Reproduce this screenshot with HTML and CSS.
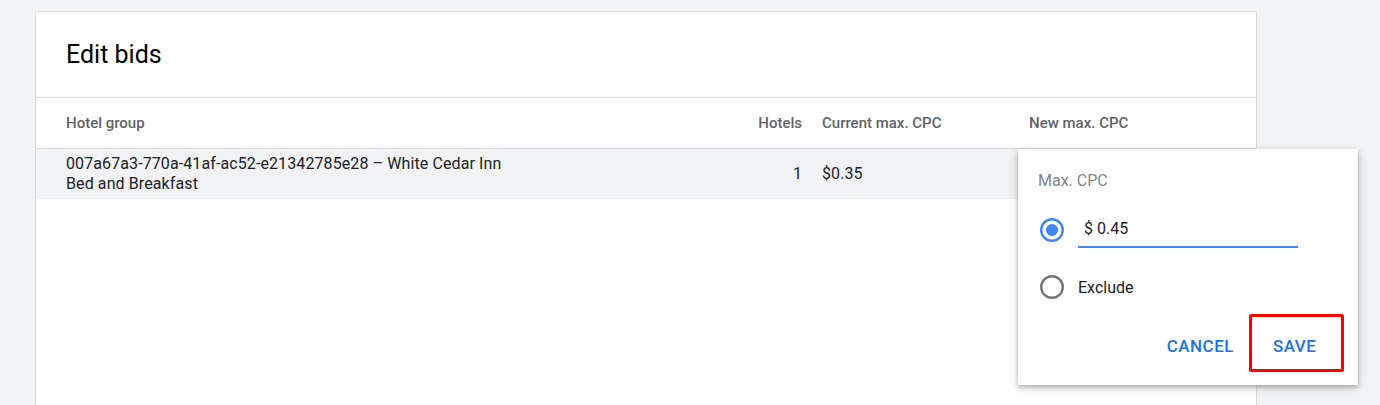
FILE: index.html
```html
<!DOCTYPE html>
<html>
<head>
<meta charset="utf-8">
<link rel="stylesheet" href="styles.css">
</head>
<body>
<div class="card">
  <div class="card-title">Edit bids</div>
  <div class="table">
    <div class="row head">
      <div class="cell group">Hotel group</div>
      <div class="cell num">Hotels</div>
      <div class="cell cur">Current max. CPC</div>
      <div class="cell new">New max. CPC</div>
    </div>
    <div class="row data">
      <div class="cell group">007a67a3-770a-41af-ac52-e21342785e28 – White Cedar Inn<br>Bed and Breakfast</div>
      <div class="cell num">1</div>
      <div class="cell cur">$0.35</div>
      <div class="cell new"></div>
    </div>
  </div>
  <div class="popup">
    <div class="popup-label">Max. CPC</div>
    <div class="opt opt-input">
      <svg class="radio" width="26" height="26" viewBox="0 0 26 26"><circle cx="13" cy="13" r="10.8" fill="none" stroke="#4285f4" stroke-width="2.4"/><circle cx="13" cy="13" r="6" fill="#4285f4"/></svg>
      <div class="field">$ 0.45</div>
    </div>
    <div class="opt">
      <svg class="radio" width="26" height="26" viewBox="0 0 26 26"><circle cx="13" cy="13" r="10.8" fill="none" stroke="#757575" stroke-width="2.4"/></svg>
      <div class="opt-text">Exclude</div>
    </div>
    <div class="actions">
      <div class="btn cancel">CANCEL</div>
      <div class="btn save">SAVE</div>
    </div>
  </div>
</div>
</body>
</html>
```
FILE: styles.css
```css
html, body {
  margin: 0;
  padding: 0;
  background: #f1f3f4;
  font-family: Roboto, "Liberation Sans", Arial, sans-serif;
  color: #202124;
  overflow: hidden;
  height: 405px;
}
.card {
  position: relative;
  margin: 11px 0 0 35px;
  width: 1222px;
  box-sizing: border-box;
  height: 420px;
  background: #fff;
  border: 1px solid #dadce0;
}
.card-title {
  font-size: 25px;
  font-weight: 400;
  color: #000;
  line-height: 32px;
  padding: 27px 30px 26px;
  border-bottom: 1px solid #dadce0;
}
.row {
  display: grid;
  grid-template-columns: 1fr 80px 227px 227px;
  padding-left: 30px;
  align-items: center;
}
.row.head {
  height: 50px;
  border-bottom: 1px solid #dadce0;
  font-size: 15px;
  font-weight: 500;
  color: #5f6368;
}
.row.data {
  height: 50px;
  background: #f1f3f4;
  font-size: 16px;
  line-height: 20px;
  letter-spacing: 0.1px;
  color: #202124;
}
.cell.num {
  text-align: right;
}
.cell.cur {
  padding-left: 20px;
}
.popup {
  position: absolute;
  left: 982px;
  top: 137px;
  width: 340px;
  box-sizing: border-box;
  background: #fff;
  padding: 24px 14px 13px 20px;
  box-shadow: 0 2px 4px rgba(0,0,0,0.2), 0 3px 10px rgba(0,0,0,0.18);
}
.popup-label {
  font-size: 16px;
  line-height: 16px;
  color: #80868b;
}
.opt {
  display: flex;
  align-items: center;
  height: 36px;
  margin-top: 21px;
  font-size: 16px;
}
.opt-input {
  margin-top: 22px;
  height: 37px;
}
.radio {
  flex: none;
  margin-left: 1px;
}
.field {
  margin-left: 13px;
  width: 220px;
  box-sizing: border-box;
  height: 37px;
  line-height: 35px;
  padding-left: 6px;
  border-bottom: 2px solid #4285f4;
}
.opt-text {
  margin-left: 13px;
}
.actions {
  display: flex;
  justify-content: flex-end;
  align-items: center;
  margin-top: 9px;
}
.btn {
  font-size: 17px;
  font-weight: 500;
  color: #1a73e8;
  letter-spacing: 0.5px;
}
.cancel {
  margin-right: 15px;
  padding-top: 6px;
}
.save {
  flex: none;
  border: 3px solid #ff0000;
  border-radius: 2px;
  width: 95px;
  height: 58px;
  box-sizing: border-box;
  display: flex;
  align-items: center;
  justify-content: flex-start;
  padding: 6px 0 0 21px;
}
```
